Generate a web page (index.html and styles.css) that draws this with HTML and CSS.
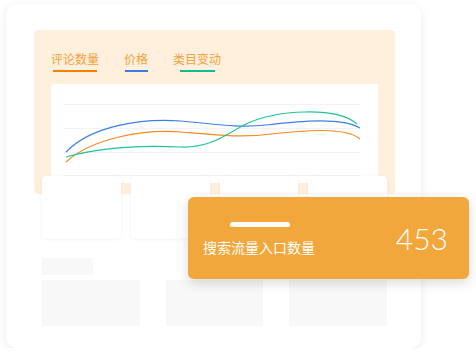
FILE: index.html
```html
<!DOCTYPE html>
<html lang="zh-CN">
<head>
  <meta charset="UTF-8" />
  <title>搜索流量</title>
  <link rel="stylesheet" href="styles.css">
</head>
<body>

<div class="frame">
  <div class="panel">
    <div class="tabs">
      <div class="tab">评论数量<span class="line orange"></span></div>
      <div class="tab">价格<span class="line blue"></span></div>
      <div class="tab">类目变动<span class="line green"></span></div>
    </div>
    <div class="chart">
      <svg width="327" height="99" viewBox="0 0 327 99">
        <g stroke="#f2f2f2" stroke-width="1">
          <line x1="12" y1="20.5" x2="309" y2="20.5" />
          <line x1="12" y1="44.5" x2="309" y2="44.5" />
          <line x1="12" y1="68.5" x2="309" y2="68.5" />
          <line x1="12" y1="91.5" x2="309" y2="91.5" />
        </g>
        <g fill="none" stroke-width="1.2">
          <path stroke="#3c80e6" d="M15,68 C40,42 90,34 130,37 C165,40 185,44 215,41 C250,37 290,33 309,44" />
          <path stroke="#f7891e" d="M15,78 C40,55 90,45 130,48 C165,51 190,54 220,50 C255,46 295,43 309,55" />
          <path stroke="#1ec39a" d="M15,73 C50,63 90,61 130,63 C160,64 175,50 195,40 C225,26 285,22 306,40" />
        </g>
      </svg>
    </div>
  </div>

  <div class="cards">
    <div class="card"></div>
    <div class="card"></div>
    <div class="card"></div>
    <div class="card"></div>
  </div>

  <div class="skeleton">
    <div class="label"></div>
    <div class="blocks">
      <div class="block"></div>
      <div class="block"></div>
      <div class="block"></div>
    </div>
  </div>

  <div class="popup">
    <div class="popup-left">
      <span class="bar"></span>
      <p class="popup-title">搜索流量入口数量</p>
    </div>
    <div class="popup-num">453</div>
  </div>
</div>

</body>
</html>
```

FILE: styles.css
```css
body {
  margin: 0;
  background: #fff;
  font-family: "Noto Sans CJK SC", "Noto Sans", sans-serif;
}

.frame {
  position: relative;
  box-sizing: border-box;
  width: 415px;
  height: 344px;
  margin: 4px 0 0 6px;
  padding: 26px 26px 0 28px;
  background: #fff;
  border-radius: 10px;
  box-shadow: 0 2px 10px rgba(0,0,0,0.08);
}

.panel {
  height: 164px;
  padding: 0 17px;
  background: #fff0dd;
  border-radius: 4px;
}

.tabs {
  display: flex;
  gap: 25px;
  padding-top: 21px;
}

.tab {
  display: flex;
  flex-direction: column;
  align-items: center;
  font-size: 12px;
  line-height: 16px;
  color: #f0a33c;
}

.line {
  display: block;
  height: 2px;
  margin-top: 3px;
}

.orange { width: 44px; background: #f08300; }
.blue { width: 23px; background: #3b7ddd; }
.green { width: 35px; background: #12bb92; }

.chart {
  height: 99px;
  margin-top: 12px;
  background: #fff;
}

.chart svg {
  display: block;
}

.cards {
  display: flex;
  gap: 10px;
  margin: -18px 8px 0;
}

.card {
  width: 79px;
  height: 62px;
  background: #fff;
  border-radius: 4px;
  box-shadow: 0 1px 4px rgba(0,0,0,0.05);
}

.skeleton {
  margin: 20px 8px 0;
}

.label {
  width: 51px;
  height: 17px;
  background: #f8f8f8;
}

.blocks {
  display: flex;
  gap: 26px;
  margin-top: 5px;
}

.block {
  width: 98px;
  height: 46px;
  background: #f8f8f8;
}

.popup {
  position: absolute;
  left: 182px;
  top: 193px;
  box-sizing: border-box;
  width: 281px;
  height: 82px;
  padding: 0 21px 0 15px;
  display: flex;
  align-items: center;
  justify-content: space-between;
  background: #f2a73c;
  border-radius: 6px;
  box-shadow: 0 4px 12px rgba(0,0,0,0.15);
  color: #fff;
}

.popup-left {
  align-self: flex-start;
  padding-top: 25px;
}

.bar {
  display: block;
  width: 60px;
  height: 5px;
  margin-left: 27px;
  background: #fff;
  border-radius: 3px;
}

.popup-title {
  margin: 10px 0 0;
  font-size: 14px;
  line-height: 20px;
}

.popup-num {
  font-family: Lato, sans-serif;
  font-weight: 300;
  font-size: 30px;
  line-height: 1;
}
```
